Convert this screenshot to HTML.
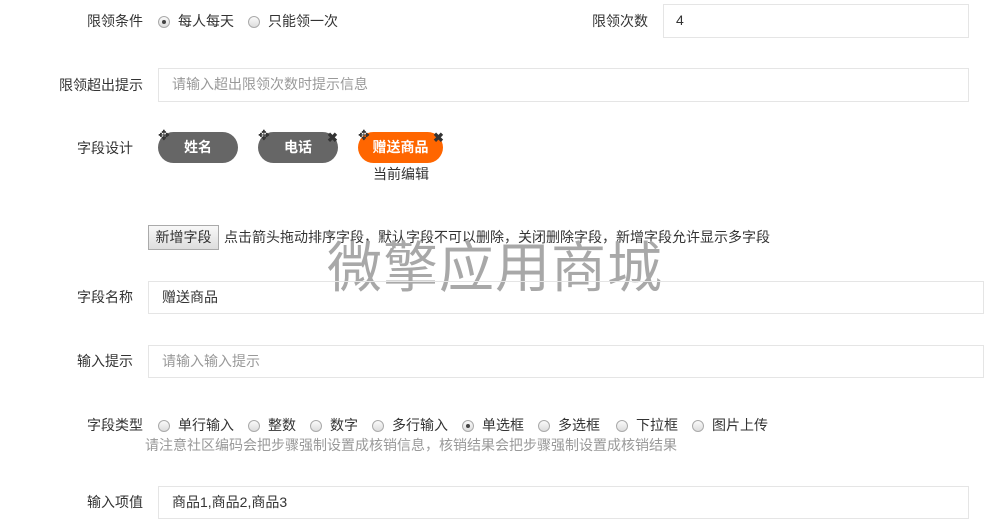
<!DOCTYPE html>
<html><head><meta charset="utf-8"><style>
body{margin:0;width:989px;height:532px;background:#fff;font-family:"Liberation Sans","Noto Sans CJK SC",sans-serif;font-size:14px;color:#333;position:relative;overflow:hidden}
.a{position:absolute;white-space:nowrap;line-height:16px}
.lbl{position:absolute;text-align:right;line-height:16px}
.inp{position:absolute;border:1px solid #e5e5e5;box-sizing:border-box;padding-left:13px;line-height:31px;font-size:14px}
.ph{color:#999}
.r{position:absolute;width:10px;height:10px;border:1px solid #aaa;border-radius:50%;background:linear-gradient(#fafafa,#ddd)}
.r.on:after{content:"";position:absolute;left:3px;top:3px;width:4px;height:4px;border-radius:50%;background:#444}
.pill{position:absolute;height:31px;border-radius:16px;background:#666;color:#fff;font-weight:bold;text-align:center;line-height:31px}
.mv{position:absolute;font-size:14px;color:#333;line-height:14px}
.x{position:absolute;font-size:13px;font-weight:bold;color:#333;line-height:13px}
</style></head><body>
<div class="lbl" style="right:846px;top:13px">限领条件</div>
<span class="r on" style="left:158px;top:16px"></span><div class="a" style="left:178px;top:13px">每人每天</div>
<span class="r" style="left:248px;top:16px"></span><div class="a" style="left:268px;top:13px">只能领一次</div>
<div class="lbl" style="right:341px;top:13px">限领次数</div>
<div class="inp" style="left:663px;top:4px;width:306px;height:34px;padding-left:12px">4</div>

<div class="lbl" style="right:846px;top:77px">限领超出提示</div>
<div class="inp ph" style="left:158px;top:68px;width:811px;height:34px">请输入超出限领次数时提示信息</div>

<div class="lbl" style="right:856px;top:140px">字段设计</div>
<div class="pill" style="left:158px;top:132px;width:80px">姓名</div>
<div class="mv" style="left:158px;top:128px">✥</div>
<div class="pill" style="left:258px;top:132px;width:80px">电话</div>
<div class="mv" style="left:258px;top:128px">✥</div><div class="x" style="left:327px;top:131px">✖</div>
<div class="pill" style="left:358px;top:132px;width:85px;background:#ff6600">赠送商品</div>
<div class="mv" style="left:358px;top:128px">✥</div><div class="x" style="left:433px;top:131px">✖</div>
<div class="a" style="left:373px;top:166px">当前编辑</div>

<div class="a" style="left:148px;top:225px;width:71px;height:25px;border:1px solid #aaa;box-sizing:border-box;background:linear-gradient(#f8f8f8,#ddd);text-align:center;line-height:23px">新增字段</div>
<div class="a" style="left:224px;top:229px">点击箭头拖动排序字段，默认字段不可以删除，关闭删除字段，新增字段允许显示多字段</div>
<div class="a" style="left:327px;top:238px;font-size:55px;color:#a8a8a8;line-height:60px;letter-spacing:1px">微擎应用商城</div>

<div class="lbl" style="right:856px;top:289px">字段名称</div>
<div class="inp" style="left:148px;top:281px;width:836px;height:33px">赠送商品</div>
<div class="lbl" style="right:856px;top:353px">输入提示</div>
<div class="inp ph" style="left:148px;top:345px;width:836px;height:33px">请输入输入提示</div>

<div class="lbl" style="right:846px;top:417px">字段类型</div>
<span class="r" style="left:158px;top:420px"></span><div class="a" style="left:178px;top:417px">单行输入</div>
<span class="r" style="left:248px;top:420px"></span><div class="a" style="left:268px;top:417px">整数</div>
<span class="r" style="left:310px;top:420px"></span><div class="a" style="left:330px;top:417px">数字</div>
<span class="r" style="left:372px;top:420px"></span><div class="a" style="left:392px;top:417px">多行输入</div>
<span class="r on" style="left:462px;top:420px"></span><div class="a" style="left:482px;top:417px">单选框</div>
<span class="r" style="left:538px;top:420px"></span><div class="a" style="left:558px;top:417px">多选框</div>
<span class="r" style="left:616px;top:420px"></span><div class="a" style="left:636px;top:417px">下拉框</div>
<span class="r" style="left:692px;top:420px"></span><div class="a" style="left:712px;top:417px">图片上传</div>
<div class="a" style="left:145px;top:437px;color:#999;font-size:14px">请注意社区编码会把步骤强制设置成核销信息，核销结果会把步骤强制设置成核销结果</div>

<div class="lbl" style="right:846px;top:494px">输入项值</div>
<div class="inp" style="left:158px;top:486px;width:811px;height:33px">商品1,商品2,商品3</div>
</body></html>
